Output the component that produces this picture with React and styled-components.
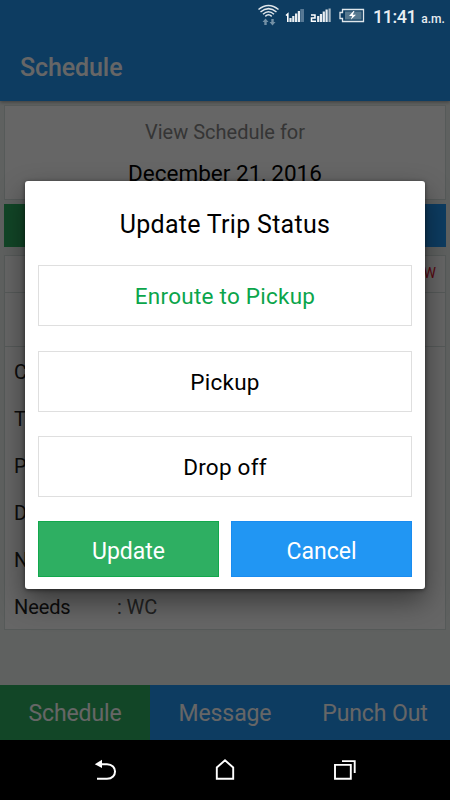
import React from "react";
import { useState } from "react";
import styled, { createGlobalStyle } from "styled-components";

const GlobalStyle = createGlobalStyle`
    * {
        box-sizing: border-box;
    }
    body {
        margin: 0;
        background: #000;
        font-family: Roboto, "Liberation Sans", sans-serif;
    }
    button {
        font-family: inherit;
        padding: 0;
    }
`;

const Phone = styled.div`
    position: relative;
    display: flex;
    flex-direction: column;
    width: 450px;
    height: 800px;
    overflow: hidden;
`;

const Screen = styled.div`
    height: 740px;
    display: flex;
    flex-direction: column;
    background: #eef3f1;
`;

const AppBar = styled.header`
    height: 101px;
    flex-shrink: 0;
    padding: 52px 20px 0;
    background: #2196f3;
    box-shadow: 0 1px 4px rgba(0, 0, 0, 0.4);
    color: #fff;
    font-size: 25px;
    font-weight: 500;
    line-height: 32px;
    letter-spacing: -0.1px;
`;

const Content = styled.main`
    flex: 1;
    padding: 4px 4px 0;
`;

const Card = styled.section`
    background: #fff;
    border: 1px solid #d8e0de;
    overflow: hidden;
`;

const DateCard = styled(Card)`
    height: 95px;
    text-align: center;
`;

const DateLabel = styled.div`
    margin-top: 12px;
    color: #858585;
    font-size: 20px;
    line-height: 28px;
`;

const DateValue = styled.div`
    margin-top: 13px;
    color: #000;
    font-size: 22.5px;
    line-height: 29px;
`;

const DayButtons = styled.div`
    display: flex;
    justify-content: space-between;
    margin-top: 4px;
`;

const DayButton = styled.button`
    width: 130px;
    height: 43px;
    border: 0;
    background: ${(props) => props.$color};
`;

const TripCard = styled(Card)`
    height: 375px;
    margin-top: 8px;
`;

const TripHead = styled.div`
    height: ${(props) => props.$height}px;
    padding: 0 9px;
    border-bottom: 1px solid #d8e0de;
    color: #e0102a;
    font-size: 14px;
    line-height: 35px;
    text-align: right;
`;

const TripRow = styled.div`
    display: flex;
    height: 47px;
    padding-left: 9px;
    color: #222;
    font-size: 20px;
    line-height: 51px;
    letter-spacing: -0.1px;
`;

const RowLabel = styled.span`
    width: 103px;
`;

const RowValue = styled.span`
    color: #555;
`;

const Tabs = styled.nav`
    display: flex;
    height: 55px;
`;

const Tab = styled.button`
    flex: 1;
    border: 0;
    padding-top: 3px;
    background: ${(props) => (props.$active ? "#2eaf62" : "#2196f3")};
    color: #fff;
    font-size: 23px;
    line-height: 52px;
    letter-spacing: -0.1px;
`;

const Overlay = styled.div`
    position: absolute;
    inset: 0 0 60px;
    padding: 181px 25px 0;
    background: rgba(0, 0, 0, 0.6);
`;

const Dialog = styled.div`
    height: 408px;
    padding: 0 13px;
    border-radius: 3px;
    background: #fff;
    box-shadow: 0 12px 28px rgba(0, 0, 0, 0.45), 0 1px 4px rgba(0, 0, 0, 0.5);
    text-align: center;
`;

const DialogTitle = styled.h2`
    margin: 0;
    padding-top: 28px;
    height: 84px;
    color: #000;
    font-size: 25px;
    font-weight: 400;
    line-height: 32px;
    letter-spacing: 0.28px;
`;

const Option = styled.button`
    display: block;
    width: 100%;
    height: 61px;
    margin-bottom: ${(props) => props.$gap}px;
    border: 1px solid #dfdfdf;
    background: #fff;
    color: ${(props) => (props.$selected ? "#0ba54b" : "#000")};
    font-size: 22.5px;
    line-height: 61px;
    letter-spacing: 0.25px;
`;

const Actions = styled.div`
    display: flex;
    gap: 12px;
`;

const Action = styled.button`
    flex: 1;
    height: 56px;
    padding-top: 3px;
    border: 1px solid ${(props) => props.$edge};
    background: ${(props) => props.$color};
    color: #fff;
    font-size: 23px;
    line-height: 53px;
`;

const StatusBar = styled.div`
    position: absolute;
    top: 0;
    right: 0;
    display: flex;
    height: 32px;
    padding-right: 7px;
    color: #e9eef2;
`;

const Clock = styled.div`
    width: 70px;
    font-size: 18px;
    font-weight: 500;
    line-height: 33px;
    letter-spacing: -0.5px;
    white-space: nowrap;

    small {
        margin-left: 5px;
        font-size: 12px;
        letter-spacing: 0;
    }
`;

const SystemNav = styled.div`
    display: flex;
    height: 60px;
    padding: 0 45px;
    background: #000;
`;

const SystemKey = styled.div`
    flex: 1;
    display: flex;
    justify-content: center;
    align-items: center;
`;

const StatusIcons = () => (
    <svg width="123" height="32" viewBox="250 0 123 32" fill="none">
        {/* wifi */}
        <g stroke="#dfe6eb" strokeWidth="1.5">
            <path d="M258.5 9.5Q268.5 1.5 278.5 9.5" />
            <path d="M260.5 12Q268.5 5.2 276.5 12" />
            <path d="M263 14.2Q268.5 9.2 274 14.2" />
            <path d="M265.3 16.4Q268.5 13.2 271.7 16.4" />
        </g>
        <path d="M265.5 18.5L268.5 22H266.7V25H264.3V22H262.5ZM272.5 25.5L269.5 22H271.3V19H273.7V22H275.5Z" fill="#7390a5" />
        {/* sim signals */}
        <path d="M286 15.5L287.8 14V22" stroke="#fff" strokeWidth="1.6" />
        <path d="M290.5 22V18M293.3 22V16M296.1 22V13.5M298.9 22V11" stroke="#e9eef2" strokeWidth="2.2" />
        <path d="M301.3 22V9M303 22V9" stroke="#567894" strokeWidth="2" />
        <path d="M311 15H315V18H311.5V21.3H316" stroke="#fff" strokeWidth="1.5" />
        <path d="M318.2 22V16M321 22V14M323.8 22V11.5M326.6 22V9.5" stroke="#e9eef2" strokeWidth="2.2" />
        <path d="M329.6 22V8.5" stroke="#a5b5c2" strokeWidth="2.2" />
        {/* battery */}
        <path d="M342.5 9.5H363.5V21.5H342.5V18.5H340V12.5H342.5Z" stroke="#dfe6eb" strokeWidth="1.3" />
        <path d="M345 11.5H361.5V19.5H345Z" fill="#56788f" />
        <path d="M353.5 11L349 16H352.2L350.8 19.7L356 14.8H352.7L354.5 11Z" fill="#fff" />
    </svg>
);

const BackIcon = () => (
    <svg width="24" height="24" viewBox="93 758 24 24" fill="none">
        <path d="M98 764.3H107C117.7 764.3 117.7 778.7 107 778.7H97" stroke="#fff" strokeWidth="2" />
        <path d="M94.8 764.2L102 759.8V768Z" fill="#fff" />
    </svg>
);

const HomeIcon = () => (
    <svg width="24" height="24" viewBox="213 758 24 24" fill="none">
        <path d="M216.8 778.7V767.5L225 760.3L233.2 767.5V778.7Z" stroke="#fff" strokeWidth="1.9" />
    </svg>
);

const RecentIcon = () => (
    <svg width="24" height="24" viewBox="333 758 24 24" fill="none">
        <path d="M335 764.9H350.8V778.8H335Z" stroke="#fff" strokeWidth="1.9" />
        <path d="M342 761.1H354.7V773" stroke="#fff" strokeWidth="1.9" />
    </svg>
);

const rows = [
    { label: "C" },
    { label: "T" },
    { label: "P" },
    { label: "D" },
    { label: "N" },
    { label: "Needs", value: "WC" },
];

const options = ["Enroute to Pickup", "Pickup", "Drop off"];

export default function App() {
    const [selected, setSelected] = useState("Enroute to Pickup");

    return (
        <Phone>
            <GlobalStyle />
            <Screen>
                <AppBar>Schedule</AppBar>
                <Content>
                    <DateCard>
                        <DateLabel>View Schedule for</DateLabel>
                        <DateValue>December 21, 2016</DateValue>
                    </DateCard>
                    <DayButtons>
                        <DayButton $color="#2eaf62" />
                        <DayButton $color="#2196f3" />
                    </DayButtons>
                    <TripCard>
                        <TripHead $height={37}>W</TripHead>
                        <TripHead $height={54} />
                        {rows.map((row) => (
                            <TripRow key={row.label}>
                                <RowLabel>{row.label}</RowLabel>
                                {row.value && <RowValue>: {row.value}</RowValue>}
                            </TripRow>
                        ))}
                    </TripCard>
                </Content>
                <Tabs>
                    <Tab $active>Schedule</Tab>
                    <Tab>Message</Tab>
                    <Tab>Punch Out</Tab>
                </Tabs>
            </Screen>
            <SystemNav>
                <SystemKey><BackIcon /></SystemKey>
                <SystemKey><HomeIcon /></SystemKey>
                <SystemKey><RecentIcon /></SystemKey>
            </SystemNav>

            <Overlay>
                <Dialog>
                    <DialogTitle>Update Trip Status</DialogTitle>
                    {options.map((name, i) => (
                        <Option
                            key={name}
                            $selected={name === selected}
                            $gap={i === 0 ? 25 : 24}
                            onClick={() => setSelected(name)}
                        >
                            {name}
                        </Option>
                    ))}
                    <Actions>
                        <Action $color="#2eaf62" $edge="#12a84c">Update</Action>
                        <Action $color="#2196f3" $edge="#1a8cf0">Cancel</Action>
                    </Actions>
                </Dialog>
            </Overlay>

            <StatusBar>
                <StatusIcons />
                <Clock>11:41<small>a.m.</small></Clock>
            </StatusBar>
        </Phone>
    );
}
